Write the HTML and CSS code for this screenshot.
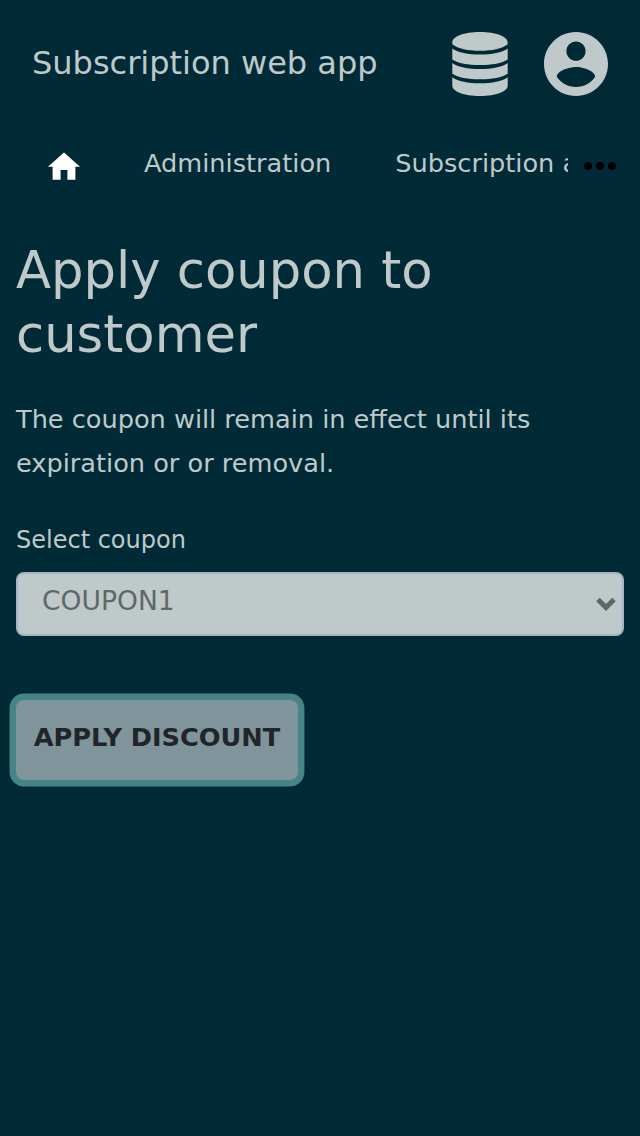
FILE: index.html
```html
<!DOCTYPE html>
<html lang="en">
<head>
<meta charset="utf-8">
<title>Subscription web app</title>
<link rel="stylesheet" href="styles.css">
</head>
<body>
<header class="header">
  <span class="brand">Subscription web app</span>
  <svg class="database" viewBox="0 0 56 64"><path d="M.3 10.500C.3 4.500 12 0 28 0S55.700 4.500 55.700 10.500V12.300C50 16.800 40 18.800 28 18.800S6 16.800 .3 12.300zM.3 16.500C6 20.500 16 22.500 28 22.500S50 20.500 55.700 16.500V27.500C50 31.300 40 33.100 28 33.100S6 31.300 .3 27.500zM.3 31C6 35 16 37 28 37S50 35 55.700 31V41.700C50 45.500 40 47.300 28 47.300S6 45.500 .3 41.700zM.3 45.300C6 49.300 16 51.300 28 51.300S50 49.300 55.700 45.300V53.500C55.700 59.500 44 64 28 64S.3 59.500 .3 53.500z"/></svg>
  <svg class="account" viewBox="2 2 20 20"><path d="M12 2C6.480 2 2 6.480 2 12s4.480 10 10 10 10-4.480 10-10S17.520 2 12 2zm0 3c1.660 0 3 1.340 3 3s-1.340 3-3 3-3-1.340-3-3 1.340-3 3-3zm0 14.200c-2.500 0-4.710-1.280-6-3.220.030-1.990 4-3.080 6-3.080 1.990 0 5.970 1.090 6 3.080-1.290 1.940-3.500 3.220-6 3.220z"/></svg>
</header>
<nav class="nav">
  <div class="tabs">
    <svg class="home" viewBox="0 0 32 28"><path d="M12.600 27.700V18H19.400v9.700h8V14.700H32L16 .500 0 14.700h4.600v13z"/></svg>
    <span class="tab">Administration</span>
    <span class="tab">Subscription administration</span>
  </div>
  <svg class="more" viewBox="0 0 32 8"><circle cx="4" cy="4" r="4"/><circle cx="16" cy="4" r="4"/><circle cx="28" cy="4" r="4"/></svg>
</nav>
<main class="content">
  <h1 class="title">Apply coupon to customer</h1>
  <p class="description">The coupon will remain in effect until its expiration or or removal.</p>
  <div class="label">Select coupon</div>
  <div class="select"><span class="value">COUPON1</span><svg class="chevron" viewBox="0 0 20 14"><path d="M2 2.500l8 8 8-8"/></svg></div>
  <button class="button">APPLY DISCOUNT</button>
</main>
</body>
</html>
```
FILE: styles.css
```css
* { box-sizing: border-box; }
body { margin: 0; min-height: 1136px; background: #002b36; color: #bfc9ca; font-family: "DejaVu Sans", sans-serif; font-size: 25.6px; }
svg { display: block; flex: none; }
.header { display: flex; align-items: center; height: 128px; padding: 0 32px; fill: #bfc9ca; }
.brand { flex: 1; padding-bottom: 2px; font-size: 32px; line-height: 44px; white-space: nowrap; }
.database { width: 56px; height: 64px; margin-right: 36px; }
.account { width: 64px; height: 64px; }
.nav { display: flex; height: 72px; padding: 0 24px 0 48px; }
.tabs { display: flex; width: 520px; overflow: hidden; white-space: nowrap; }
.home { width: 32px; height: 28px; margin-top: 24px; fill: #fff; }
.tab { margin-left: 64px; line-height: 44px; padding-top: 13px; }
.more { width: 32px; height: 8px; margin: 34px 0 0 16px; }
.content { padding: 38px 16px; }
.title { margin: 0; font-size: 51.2px; font-weight: 400; line-height: 64px; }
.description { margin: 31px 0 0; line-height: 44px; }
.label { margin-top: 37px; font-size: 24px; line-height: 36px; }
.select { display: flex; align-items: center; justify-content: space-between; height: 64px; margin-top: 14px; padding: 0 6px 0 24px; border: 2px solid #a5b4c0; border-radius: 8px; background: #bfc9ca; color: #5f6768; font-size: 26.6px; }
.value { padding-bottom: 7px; }
.chevron { width: 20px; height: 14px; fill: none; stroke: #5f6667; stroke-width: 5; }
.button { display: block; width: 282px; height: 80px; margin-top: 64px; padding: 0 0 6px; border: 0; border-radius: 8px; box-shadow: 0 0 0 6.4px #458585; background: #80949b; color: #212529; font: bold 25.6px "DejaVu Sans", sans-serif; white-space: nowrap; }
```
